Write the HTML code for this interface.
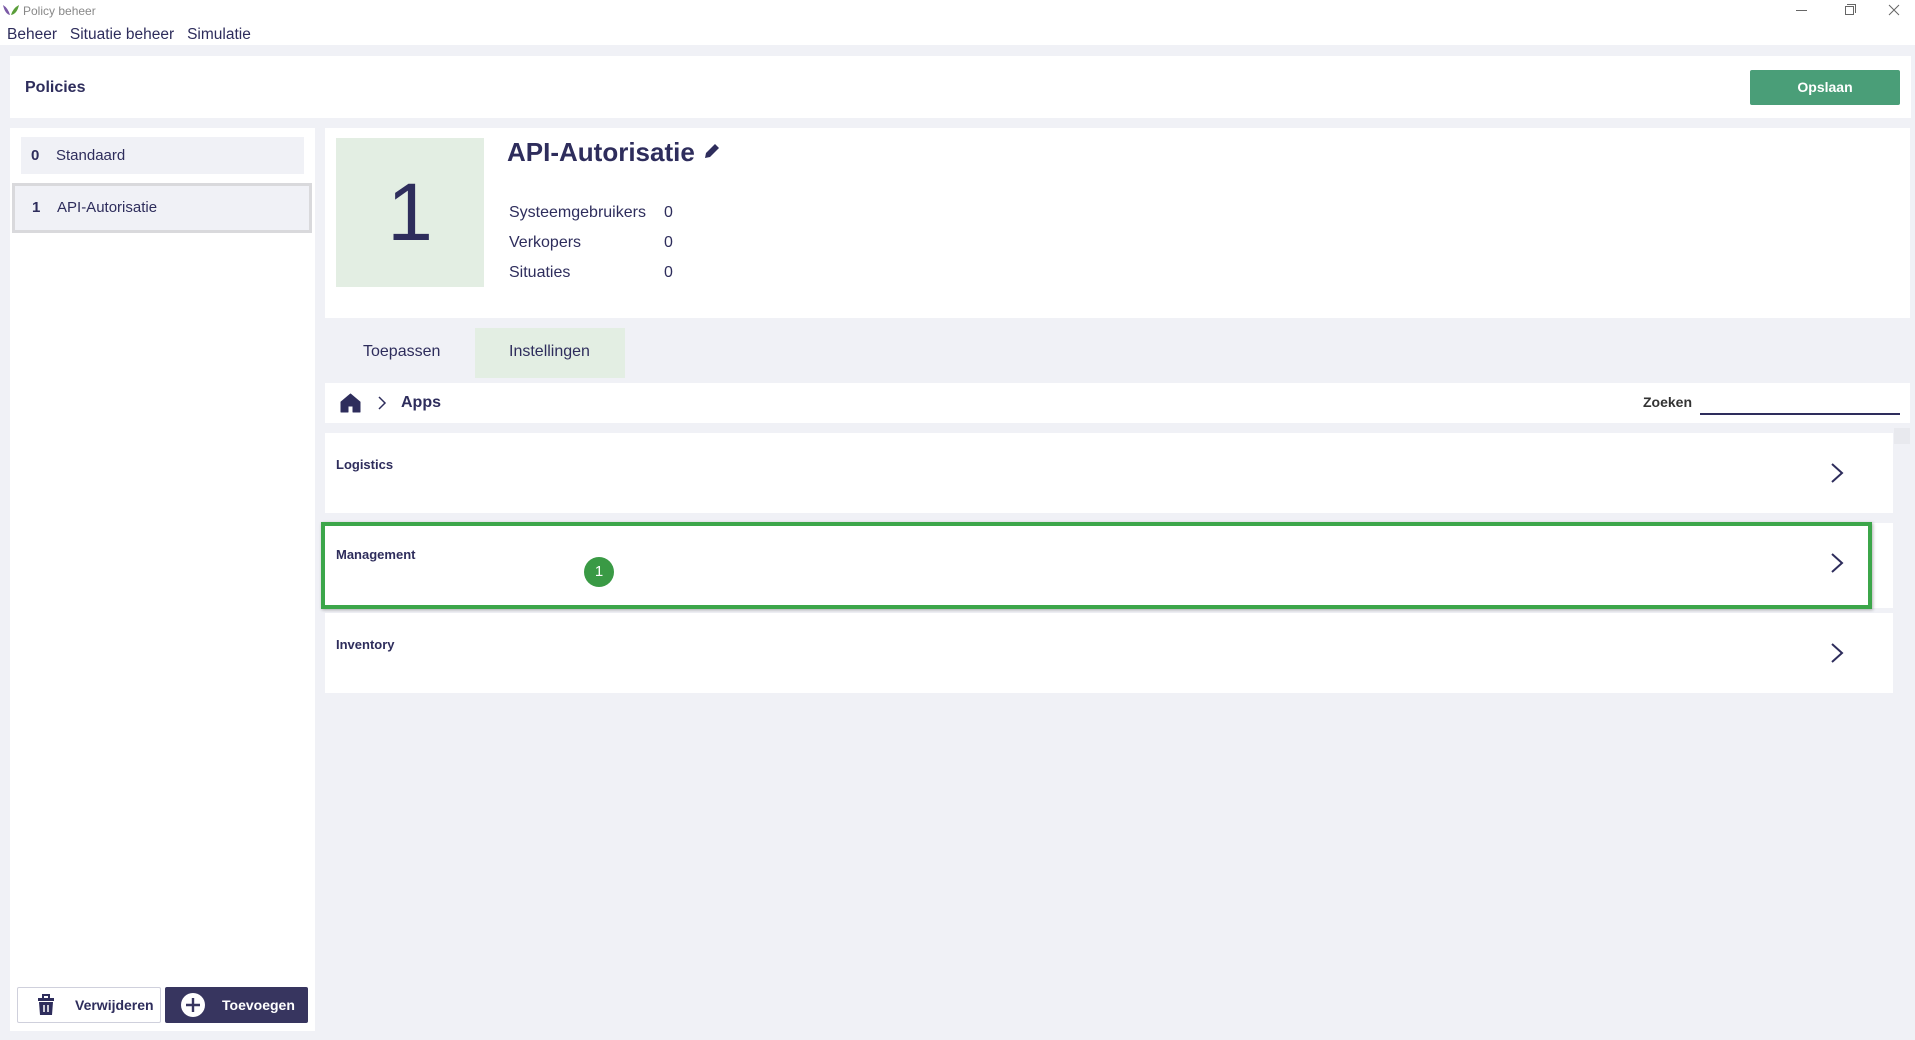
<!DOCTYPE html>
<html><head><meta charset="utf-8"><style>
*{box-sizing:border-box;margin:0;padding:0}
body{width:1915px;height:1040px;overflow:hidden;background:#f0f1f6;font-family:"Liberation Sans",sans-serif;color:#2e2d5c;position:relative}
.a{position:absolute}
.w{background:#fff}
</style></head><body>
<div class="a w" style="left:0;top:0;width:1915px;height:45px"></div>
<svg class="a" style="left:2px;top:4px" width="18" height="12" viewBox="0 0 18 12"><path d="M1 1 Q3 10 8 11 Q6 4 1 1Z" fill="#7b5aa6"/><path d="M17 1 Q15 10 9 11 Q11 4 17 1Z" fill="#5a9e3a"/></svg>
<div class="a" style="left:23px;top:4px;font-size:12px;color:#888">Policy beheer</div>
<div class="a" style="left:1796px;top:10px;width:11px;height:1px;background:#666"></div>
<div class="a" style="left:1845px;top:6px;width:9px;height:9px;border:1px solid #666"></div>
<div class="a" style="left:1847px;top:4px;width:9px;height:9px;border-top:1px solid #666;border-right:1px solid #666"></div>
<svg class="a" style="left:1888px;top:4px" width="12" height="12"><path d="M1 1L11 11M11 1L1 11" stroke="#666" stroke-width="1"/></svg>
<div class="a" style="left:7px;top:26px;font-size:15.5px;color:#2e2d5c">Beheer&nbsp;&nbsp; Situatie beheer&nbsp;&nbsp; Simulatie</div>

<div class="a w" style="left:10px;top:56px;width:1901px;height:62px"></div>
<div class="a" style="left:25px;top:79px;font-size:16px;font-weight:bold">Policies</div>
<div class="a" style="left:1750px;top:70px;width:150px;height:35px;background:#4a9e78;border-radius:2px;color:#fff;font-weight:bold;font-size:14px;text-align:center;line-height:35px">Opslaan</div>

<div class="a w" style="left:10px;top:128px;width:305px;height:903px"></div>
<div class="a" style="left:21px;top:137px;width:283px;height:37px;background:#f0f1f6;font-size:15px;line-height:37px;padding-left:10px"><b>0</b>&nbsp;&nbsp;&nbsp;&nbsp;Standaard</div>
<div class="a" style="left:12px;top:183px;width:300px;height:50px;background:#f0f1f6;border:3px solid #d9d9dc;font-size:15px;line-height:44px;padding-left:17px"><b>1</b>&nbsp;&nbsp;&nbsp;&nbsp;API-Autorisatie</div>
<div class="a w" style="left:17px;top:987px;width:144px;height:36px;border:1px solid #cfd0dc;border-radius:2px;font-weight:bold;font-size:14px;line-height:34px;padding-left:57px">Verwijderen</div>
<svg class="a" style="left:35px;top:994px" width="22" height="22" viewBox="0 0 22 22"><rect x="3" y="4" width="16" height="3" fill="#2e2d5c"/><rect x="8" y="1" width="6" height="4" fill="none" stroke="#2e2d5c" stroke-width="2"/><path d="M4 8h14l-1 13H5z" fill="#2e2d5c"/><path d="M9 11v7M13 11v7" stroke="#fff" stroke-width="1.5"/></svg>
<div class="a" style="left:165px;top:987px;width:143px;height:36px;background:#37355f;border-radius:2px;color:#fff;font-weight:bold;font-size:14px;line-height:36px;padding-left:57px">Toevoegen</div>
<svg class="a" style="left:181px;top:993px" width="24" height="24"><circle cx="12" cy="12" r="12" fill="#fff"/><path d="M12 5v14M5 12h14" stroke="#37355f" stroke-width="2.4"/></svg>

<div class="a w" style="left:325px;top:128px;width:1585px;height:190px"></div>
<div class="a" style="left:336px;top:138px;width:148px;height:149px;background:#e3eee3;text-align:center;font-size:82px;line-height:149px">1</div>
<div class="a" style="left:507px;top:137px;font-size:26px;font-weight:bold">API-Autorisatie</div>
<svg class="a" style="left:702px;top:141px" width="20" height="20"><path d="M3 17l1-5L13 3l4 4-9 9z" fill="#2e2d5c"/></svg>
<div class="a" style="left:509px;top:198px;font-size:16px;line-height:30px">Systeemgebruikers<br>Verkopers<br>Situaties</div>
<div class="a" style="left:664px;top:198px;font-size:16px;line-height:30px">0<br>0<br>0</div>

<div class="a" style="left:475px;top:328px;width:150px;height:50px;background:#e3eee3"></div>
<div class="a" style="left:363px;top:343px;font-size:16px">Toepassen</div>
<div class="a" style="left:509px;top:343px;font-size:16px">Instellingen</div>

<div class="a w" style="left:325px;top:383px;width:1585px;height:40px"></div>
<svg class="a" style="left:340px;top:393px" width="21" height="20" viewBox="0 0 21 20"><path d="M10.5 1L1 9v10h7v-6h5v6h7V9z" fill="#2e2d5c" stroke="#2e2d5c" stroke-linejoin="round"/></svg>
<svg class="a" style="left:377px;top:396px" width="10" height="14"><path d="M2 1l6 6-6 6" fill="none" stroke="#2e2d5c" stroke-width="1.5"/></svg>
<div class="a" style="left:401px;top:394px;font-size:16px;font-weight:bold">Apps</div>
<div class="a" style="left:1643px;top:394px;font-size:14px;font-weight:bold;color:#333">Zoeken</div>
<div class="a" style="left:1700px;top:413px;width:200px;height:2px;background:#2e2d5c"></div>

<div class="a w" style="left:325px;top:433px;width:1568px;height:80px"></div>
<div class="a" style="left:336px;top:457px;font-size:13px;font-weight:bold">Logistics</div>
<div class="a w" style="left:325px;top:523px;width:1568px;height:85px"></div>
<div class="a" style="left:321px;top:522px;width:1551px;height:87px;border:4px solid #3ca64a;box-shadow:1px 1px 3px rgba(0,0,0,.3)"></div>
<div class="a" style="left:336px;top:547px;font-size:13px;font-weight:bold">Management</div>
<div class="a" style="left:584px;top:557px;width:30px;height:30px;border-radius:50%;background:#3a9a45;color:#fff;text-align:center;line-height:30px;font-size:15px">1</div>
<div class="a w" style="left:325px;top:613px;width:1568px;height:80px"></div>
<div class="a" style="left:336px;top:637px;font-size:13px;font-weight:bold">Inventory</div>
<svg class="a" style="left:1829px;top:462px" width="16" height="22"><path d="M3 2l10 9-10 9" fill="none" stroke="#2e2d5c" stroke-width="2"/></svg>
<svg class="a" style="left:1829px;top:552px" width="16" height="22"><path d="M3 2l10 9-10 9" fill="none" stroke="#2e2d5c" stroke-width="2"/></svg>
<svg class="a" style="left:1829px;top:642px" width="16" height="22"><path d="M3 2l10 9-10 9" fill="none" stroke="#2e2d5c" stroke-width="2"/></svg>
<div class="a" style="left:1894px;top:428px;width:16px;height:16px;background:#e8e9ee"></div>
</body></html>
